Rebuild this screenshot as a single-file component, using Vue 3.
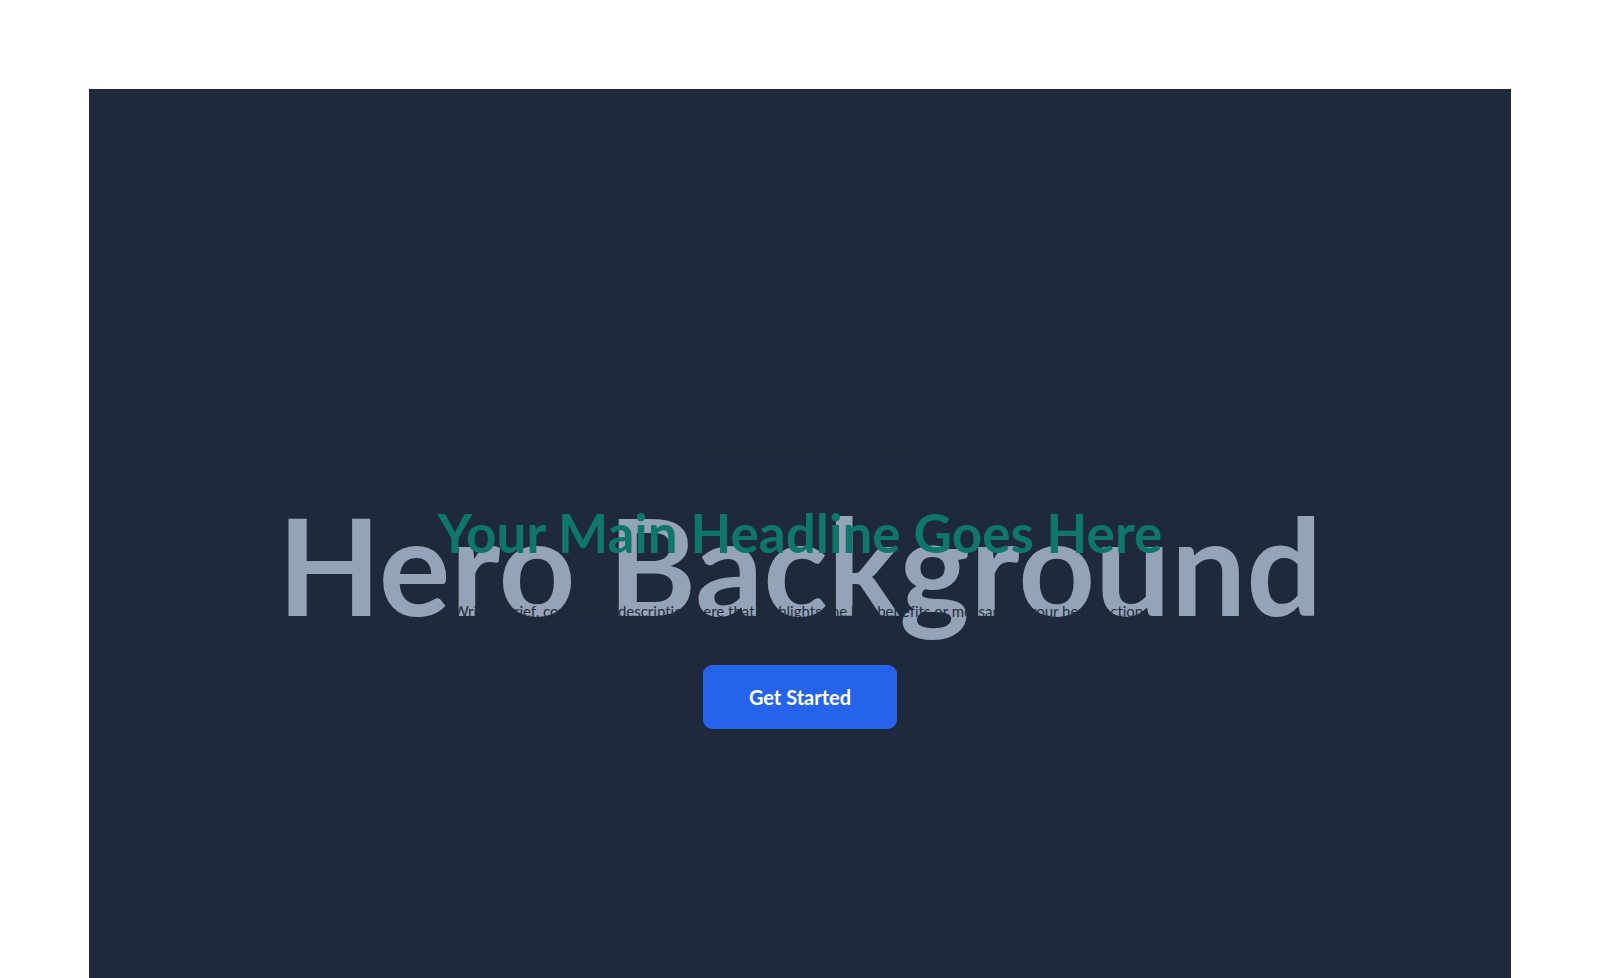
<script setup>
const eyebrow = 'Optional Subheading / Hero Section'
</script>

<template>
  <main class="page">
    <section class="hero">
      <p class="backdrop" aria-hidden="true">Hero Background</p>
      <div class="content">
        <p class="eyebrow">{{ eyebrow }}</p>
        <h1 class="headline">Your Main Headline Goes Here</h1>
        <p class="description">
          Write a brief, compelling description here that highlights the key benefits or message of your hero section.
        </p>
        <button class="cta" type="button">Get Started</button>
      </div>
    </section>
  </main>
</template>

<style>
body {
  margin: 0;
  background: #ffffff;
}
</style>

<style scoped>
.page {
  box-sizing: border-box;
  height: 100vh;
  padding: 89px 89px 0;
  overflow: hidden;
  font-family: Lato, "Liberation Sans", sans-serif;
}
.hero {
  display: grid;
  justify-items: center;
  align-items: start;
  min-height: 100vh;
  background: #1e293b;
}
.backdrop,
.content {
  grid-area: 1 / 1;
}
.backdrop {
  margin: 396px 0 0;
  color: #94a3b8;
  font-size: 134px;
  font-weight: 700;
  line-height: 160px;
  white-space: nowrap;
}
.content {
  display: flex;
  flex-direction: column;
  align-items: center;
  padding-top: 350px;
  position: relative;
  text-align: center;
}
.eyebrow {
  margin: 0;
  color: #1f2d3a;
  font-size: 14px;
  line-height: 24px;
}
.headline {
  margin: 38px 0 0;
  color: #0f766e;
  font-size: 53px;
  font-weight: 700;
  line-height: 64px;
  white-space: nowrap;
}
.description {
  margin: 34px 0 0;
  color: #1f2d3a;
  font-size: 15px;
  font-variant-ligatures: none;
  line-height: 24px;
  white-space: nowrap;
}
.cta {
  margin-top: 42px;
  padding: 20px 46px;
  border: 0;
  border-radius: 9px;
  background: #2563eb;
  color: #ffffff;
  font: 700 20px/24px Lato, "Liberation Sans", sans-serif;
}
</style>
